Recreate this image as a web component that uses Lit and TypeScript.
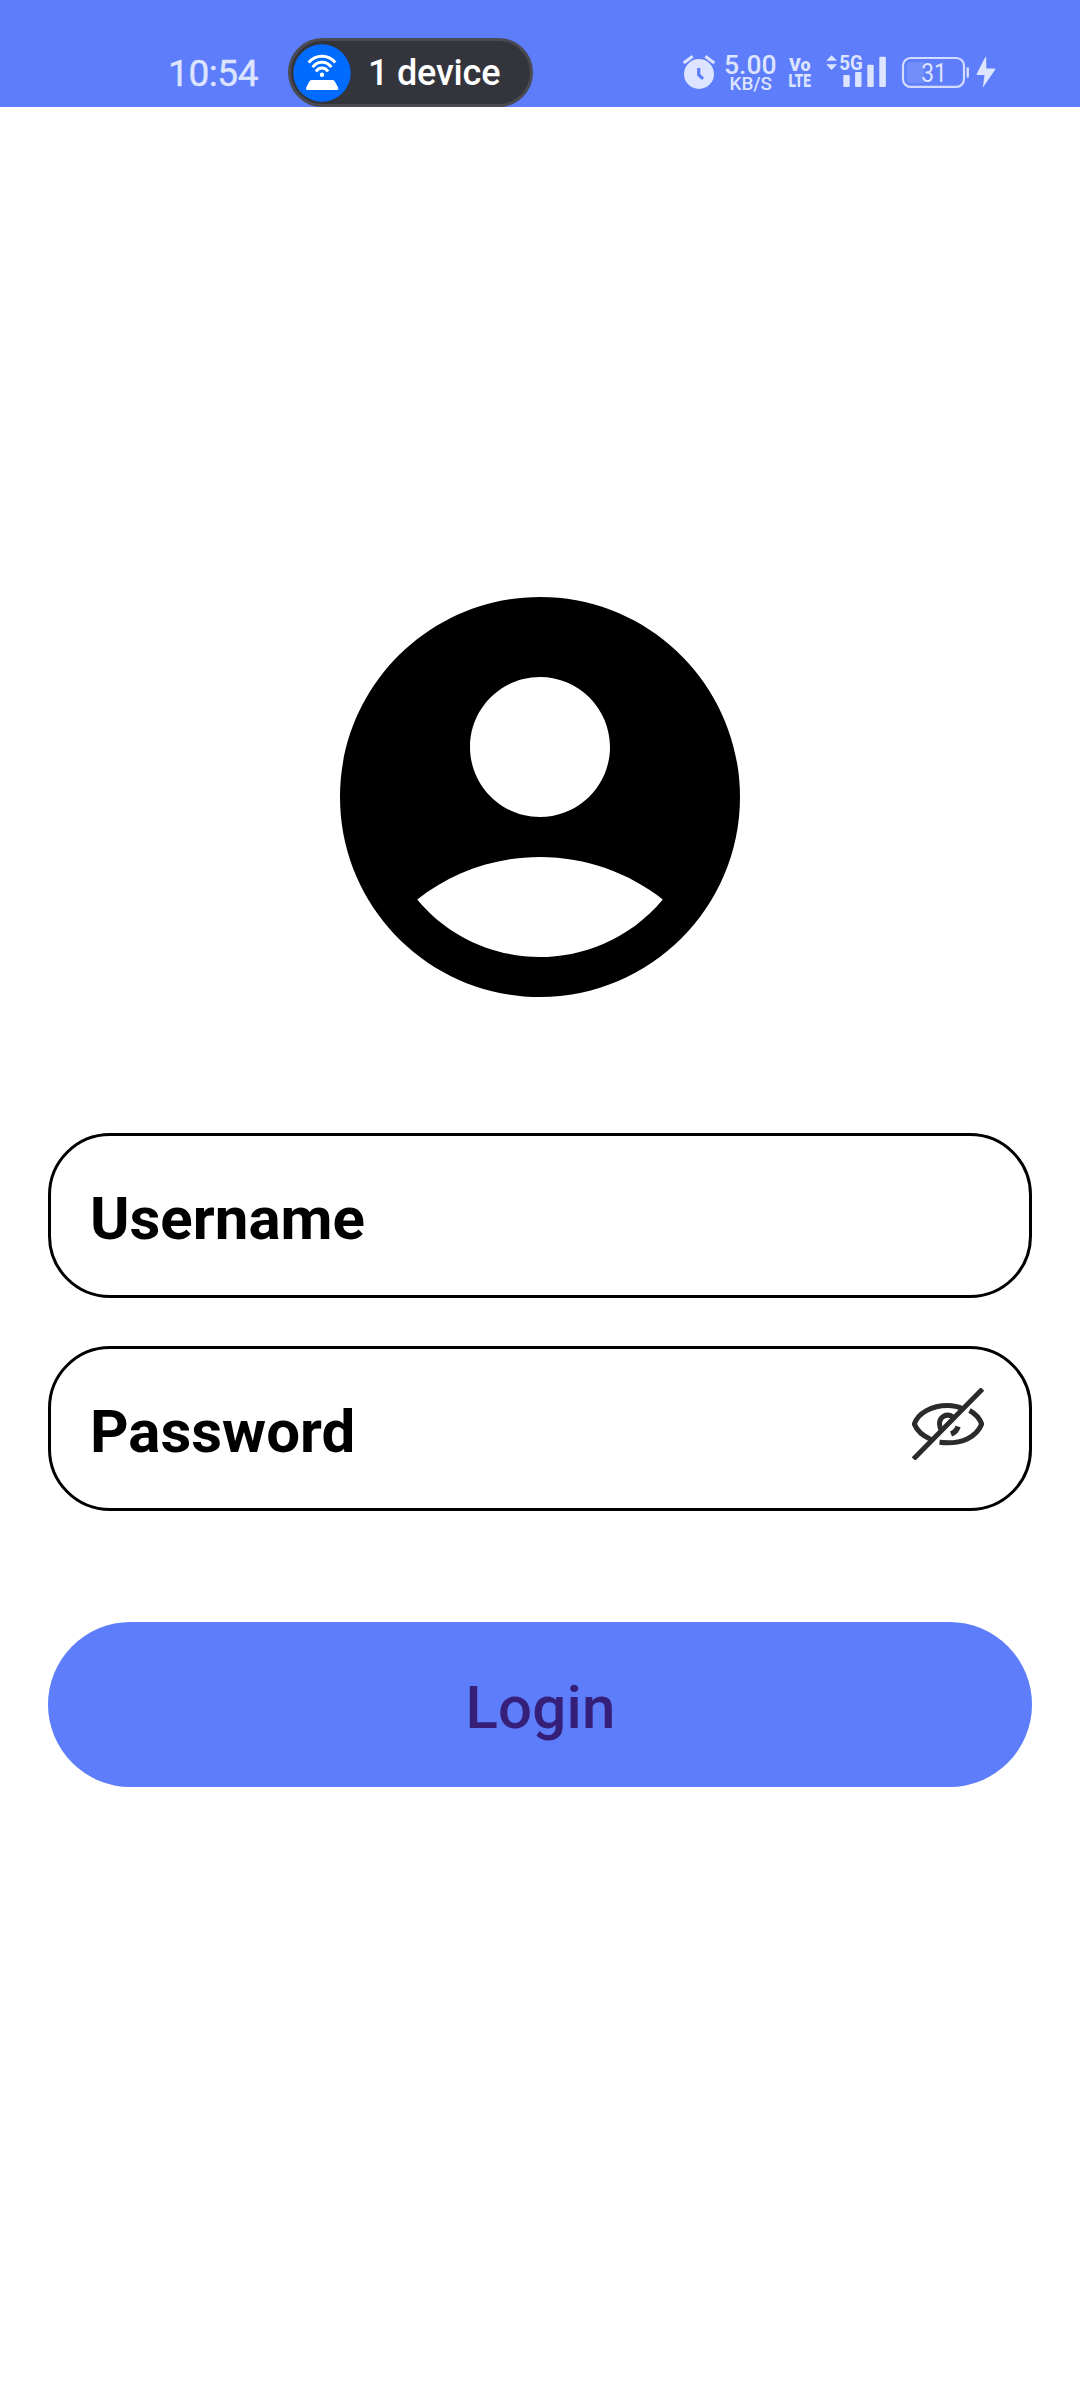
import { LitElement, html, css } from "lit";
import { customElement } from "lit/decorators.js";

@customElement("status-bar")
class StatusBar extends LitElement {
  static styles = css`
    :host {
      display: flex;
      align-items: flex-start;
      box-sizing: border-box;
      width: 1080px;
      height: 107px;
      padding-top: 38px;
      background: #5d7dfb;
      color: #dde4ff;
      font-family: Roboto, "Liberation Sans", sans-serif;
    }
    .time {
      box-sizing: border-box;
      width: 288px;
      padding: 1px 0 0 168px;
      font-size: 37px;
      line-height: 69px;
      letter-spacing: -0.4px;
      -webkit-text-stroke: 0.4px #dde4ff;
    }
    .pill {
      display: flex;
      align-items: center;
      box-sizing: border-box;
      width: 245px;
      height: 69px;
      padding-left: 2px;
      border: 3px solid #4a4b52;
      border-radius: 35px;
      background: #33343c;
      color: #fff;
      font-size: 36px;
      font-weight: 500;
      line-height: 63px;
      letter-spacing: -0.2px;
    }
    .device {
      padding-top: 1px;
    }
    .pill svg {
      flex: none;
      margin-right: 17px;
    }
    .icons {
      margin-left: 147px;
    }
    svg {
      display: block;
    }
    text {
      font-family: Roboto, "Liberation Sans", sans-serif;
    }
  `;

  render() {
    return html`
      <span class="time">10:54</span>
      <div class="pill">
        <svg width="58" height="58" viewBox="0 0 58 58">
          <circle cx="29" cy="29" r="28.7" fill="#006cff" />
          <g fill="none" stroke="#fff" stroke-width="3">
            <path d="M15.7 18.6A17 17 0 0 1 42.3 18.6" />
            <path d="M19.7 23.2A11.1 11.1 0 0 1 38.3 23.2" />
            <path d="M23 27.4A6.9 6.9 0 0 1 35 27.4" />
          </g>
          <circle cx="29" cy="30.7" r="2.2" fill="#fff" />
          <path
            fill="#fff"
            d="M18.5 36H39.7Q41.3 36 41.9 37.5L45.3 44Q45.9 46 44 46H14.4Q12.4 46 13 44L16.3 37.5Q16.9 36 18.5 36Z"
          />
        </svg>
        <span class="device">1 device</span>
      </div>
      <svg class="icons" width="320" height="62" viewBox="680 38 320 62" fill="#dde4ff">
        <circle cx="699" cy="74" r="15" />
        <path d="M683.7 63L692.7 56.2M714.3 63L705.3 56.2" stroke="#dde4ff" stroke-width="3" />
        <path d="M698.7 68V74.8L703 78.8" fill="none" stroke="#5d7dfb" stroke-width="3.2" />
        <text x="724" y="73.6" font-size="25" font-weight="500" textLength="52.500" lengthAdjust="spacingAndGlyphs">5.00</text>
        <text x="729.5" y="90.4" font-size="18.3" font-weight="500" textLength="42.500" lengthAdjust="spacingAndGlyphs">KB/S</text>
        <text x="789" y="71" font-size="19" font-weight="900" textLength="21.500" lengthAdjust="spacingAndGlyphs">Vo</text>
        <text x="788.500" y="86.7" font-size="19" font-weight="900" textLength="22.5" lengthAdjust="spacingAndGlyphs">LTE</text>
        <path d="M826.2 60.7L831.6 55.2L837 60.7ZM826.2 64.3H837L831.6 70Z" />
        <text x="839.3" y="70" font-size="20.5" font-weight="700" textLength="23.5" lengthAdjust="spacingAndGlyphs">5G</text>
        <rect x="843.3" y="75" width="6.4" height="12" rx="1" />
        <rect x="855.1" y="72" width="6.4" height="15" rx="1" />
        <rect x="867.3" y="64.7" width="6.4" height="22.3" rx="1" />
        <rect x="879.3" y="56.8" width="6.6" height="30.2" rx="1" />
        <rect x="903" y="58" width="61" height="28.8" rx="7.5" fill="none" stroke="#d3dcff" stroke-width="2.2" />
        <path d="M910 62H924V83.2H910Q906.8 83.2 906.8 80V65.2Q906.8 62 910 62Z" fill="#728efb" />
        <rect x="966.6" y="67.3" width="2.3" height="10.5" rx="1" />
        <text x="921.2" y="81.7" font-size="25" textLength="25.500" lengthAdjust="spacingAndGlyphs">31</text>
        <path d="M985.3 57L976.5 74.2Q976.5 75 977.5 75H984.5L982.8 87.7L995.3 69.4Q995.3 68.6 994.5 68.6H986.3L986.2 57.2Z" />
      </svg>
    `;
  }
}

@customElement("app-root")
class AppRoot extends LitElement {
  static styles = css`
    :host {
      display: block;
      width: 1080px;
      height: 2400px;
      background: #fff;
      font-family: Roboto, "Liberation Sans", sans-serif;
      font-size: 60px;
    }
    .form {
      display: flex;
      flex-direction: column;
      padding: 450px 48px 0;
    }
    .avatar {
      display: block;
      align-self: center;
      margin-bottom: 96px;
    }
    .field {
      display: flex;
      align-items: center;
      justify-content: space-between;
      box-sizing: border-box;
      height: 165px;
      margin-bottom: 48px;
      padding: 0 45px 0 39px;
      border: 3px solid #000;
      border-radius: 62px;
      color: #000;
      font-weight: 700;
    }
    .label {
      padding-top: 6px;
    }
    .eye {
      display: block;
      margin-bottom: 9px;
    }
    .login {
      box-sizing: border-box;
      height: 165px;
      margin: 63px 0 0;
      padding: 6px 0 0 1px;
      border: 0;
      border-radius: 83px;
      background: #5d7dfb;
      color: #361f78;
      font: inherit;
      font-weight: 500;
      letter-spacing: 0.2px;
    }
  `;

  render() {
    return html`
      <status-bar></status-bar>
      <main class="form">
        <svg class="avatar" width="480" height="480" viewBox="0 0 24 24">
          <path
            d="M12 2C6.48 2 2 6.48 2 12s4.48 10 10 10 10-4.48 10-10S17.52 2 12 2zm0 4c1.93 0 3.5 1.57 3.5 3.5S13.93 13 12 13s-3.5-1.57-3.5-3.5S10.07 6 12 6zm0 14c-2.03 0-4.43-.82-6.14-2.88C7.55 15.8 9.68 15 12 15s4.45.8 6.14 2.12C16.43 19.18 14.03 20 12 20z"
          />
        </svg>
        <div class="field"><span class="label">Username</span></div>
        <div class="field">
          <span class="label">Password</span>
          <svg class="eye" width="72" height="72" viewBox="0 0 72 72" fill="none" stroke="#2b2b2b" stroke-width="5">
            <path d="M70.500 1L1.500 71" />
            <path d="M51 21C46 18.500 40.500 17.500 35.500 17.500C20 17.500 6 25 2.300 36C5 43 11 48 19 51.500" />
            <path d="M57.500 22.500C63 25.500 67.500 30 69.700 36C65 48 51 57 27.500 54.300" />
            <path d="M41 29C34.500 24.500 27 29 27.500 36.500C27.600 39 28.500 41 30 42.500" />
            <path d="M46 38.500C45 42 43 44.500 39 46" stroke-width="5.500" />
          </svg>
        </div>
        <button class="login">Login</button>
      </main>
    `;
  }
}
